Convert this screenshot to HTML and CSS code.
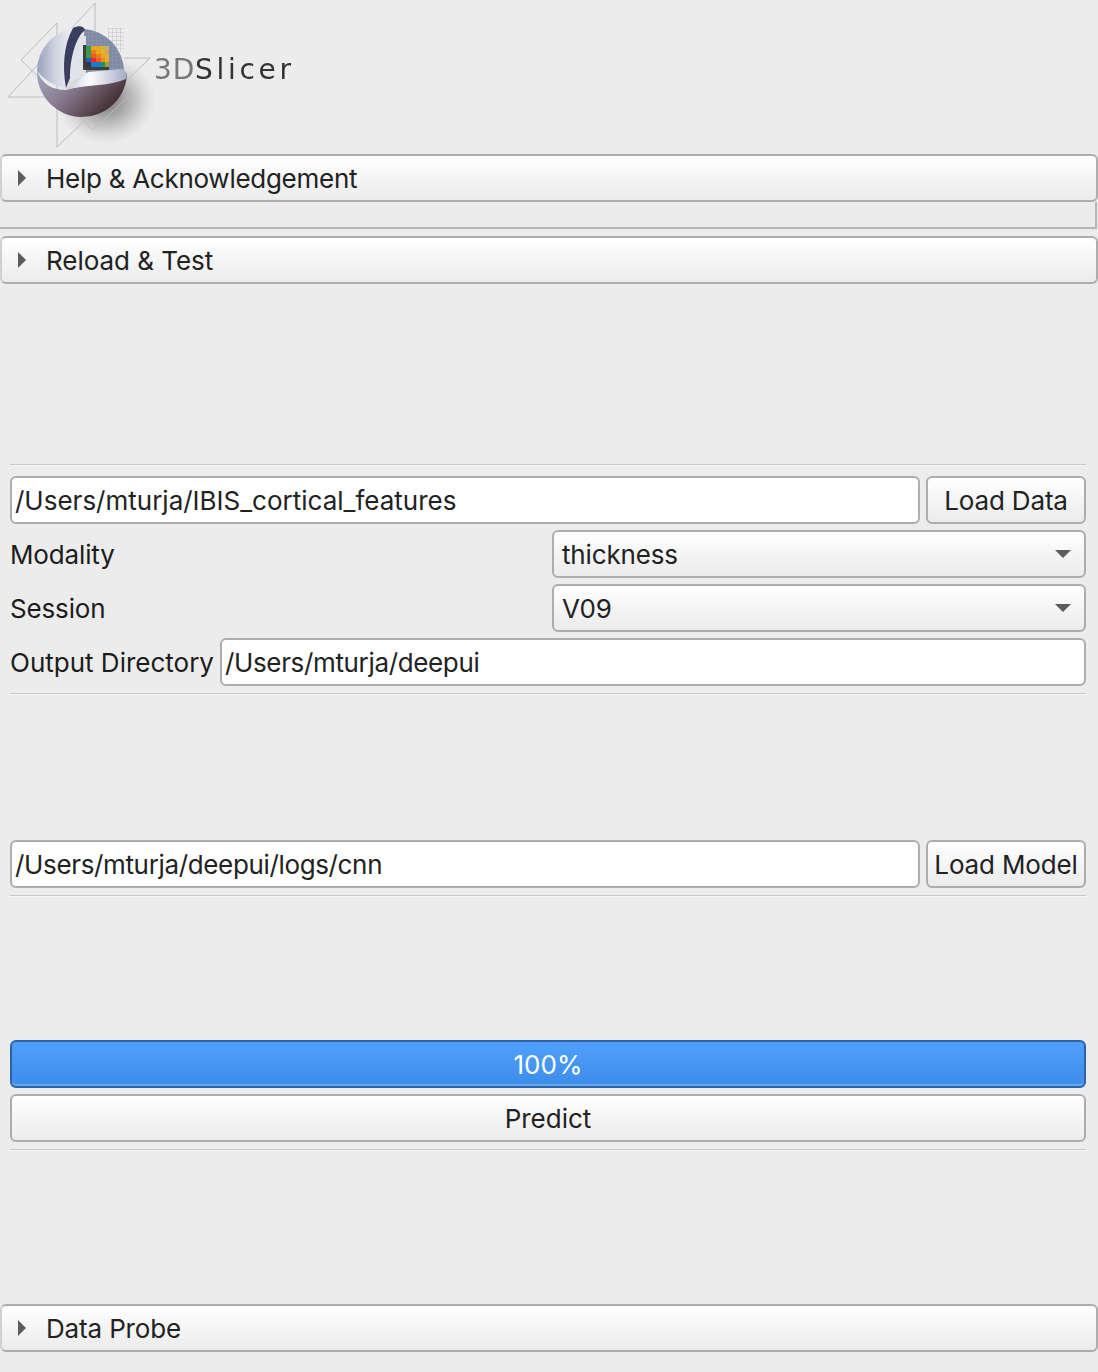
FILE: index.html
```html
<!DOCTYPE html>
<html lang="en">
<head>
    <meta charset="UTF-8">
    <meta name="viewport" content="width=device-width, initial-scale=1.0">
    <title>3D Slicer</title>
    <link rel="stylesheet" href="styles.css">
</head>
<body>

<div class="logo">
    <svg class="logo-art" width="300" height="154" viewBox="0 0 300 154">
        <defs>
            <radialGradient id="shadow">
                <stop offset="0" stop-color="#4a4a4a" stop-opacity="0.8"/>
                <stop offset="0.55" stop-color="#777" stop-opacity="0.4"/>
                <stop offset="1" stop-color="#aaa" stop-opacity="0"/>
            </radialGradient>
            <linearGradient id="shell" x1="0" y1="0" x2="1" y2="0">
                <stop offset="0" stop-color="#98a0ba"/>
                <stop offset="0.45" stop-color="#cdd2df"/>
                <stop offset="0.9" stop-color="#eceef3"/>
            </linearGradient>
            <linearGradient id="lower" x1="0" y1="0" x2="1" y2="0.5">
                <stop offset="0" stop-color="#a0a6c0"/>
                <stop offset="0.45" stop-color="#8a7c90"/>
                <stop offset="1" stop-color="#3f2a2e"/>
            </linearGradient>
            <linearGradient id="ledge" x1="0" y1="0" x2="1" y2="0">
                <stop offset="0" stop-color="#c9cede"/>
                <stop offset="0.4" stop-color="#fbfbfc"/>
                <stop offset="1" stop-color="#a5abc4"/>
            </linearGradient>
            <pattern id="mesh" width="4" height="4" patternUnits="userSpaceOnUse">
                <path d="M4 0H0V4" fill="none" stroke="#b0b0b8" stroke-width="0.7"/>
            </pattern>
        </defs>
        <ellipse cx="106" cy="100" rx="50" ry="44" fill="url(#shadow)"/>
        <g fill="none" stroke="#bcbcbc" stroke-width="1">
            <path d="M95 3 8 97H57"/>
            <path d="M57 23V147L150 58H124"/>
            <path d="M57 23 21 60 93 130 130 95"/>
            <path d="M95 3V32"/>
        </g>
        <rect x="108" y="28" width="16" height="24" fill="url(#mesh)"/>
        <path d="M76 27A45 45 0 0 0 37 71 45 45 0 0 0 66 88L72 60Z" fill="url(#shell)"/>
        <path d="M84 29A43 43 0 0 1 124 71L84 74Z" fill="#7f8aa6"/>
        <path d="M84 29A43 43 0 0 1 124 71L84 74Z" fill="url(#mesh)" opacity="0.45"/>
        <path d="M72 36H86V76L70 82Z" fill="#e0e3ea"/>
        <path d="M73 28C79 25 84 26 85 30 75 38 70 60 70 78L66 88C62 66 64 44 73 28Z" fill="#3a3e60"/>
        <path d="M83 45H86V67H109V70H83Z" fill="#3f3f3c"/>
        <g>
            <rect x="86" y="46" width="5" height="4" fill="#2f9a52"/><rect x="91" y="46" width="5" height="4" fill="#e8a81e"/><rect x="96" y="46" width="5" height="4" fill="#e8a81e"/><rect x="101" y="46" width="4" height="4" fill="#d8b04a"/><rect x="105" y="46" width="4" height="4" fill="#c9b070"/>
            <rect x="86" y="50" width="5" height="4" fill="#2f9a52"/><rect x="91" y="50" width="5" height="4" fill="#ee7a22"/><rect x="96" y="50" width="5" height="4" fill="#e8a81e"/><rect x="101" y="50" width="4" height="4" fill="#e8b01e"/><rect x="105" y="50" width="4" height="4" fill="#c9a860"/>
            <rect x="86" y="54" width="5" height="4" fill="#3a9a50"/><rect x="91" y="54" width="5" height="4" fill="#f05a20"/><rect x="96" y="54" width="5" height="4" fill="#ee7a22"/><rect x="101" y="54" width="4" height="4" fill="#e8a81e"/><rect x="105" y="54" width="4" height="4" fill="#e0b040"/>
            <rect x="86" y="58" width="5" height="4" fill="#1d62c0"/><rect x="91" y="58" width="5" height="4" fill="#ee2a1a"/><rect x="96" y="58" width="5" height="4" fill="#f05a20"/><rect x="101" y="58" width="4" height="4" fill="#ee8a1e"/><rect x="105" y="58" width="4" height="4" fill="#e8b01e"/>
            <rect x="86" y="62" width="5" height="5" fill="#34343c"/><rect x="91" y="62" width="5" height="5" fill="#1d7ad0"/><rect x="96" y="62" width="5" height="5" fill="#1d7ad0"/><rect x="101" y="62" width="4" height="5" fill="#1d9a50"/><rect x="105" y="62" width="4" height="5" fill="#9aa040"/>
        </g>
        <path d="M37 71A45 45 0 0 0 127 73L124 78C106 86 84 84 66 90 52 90 42 84 37 71Z" fill="url(#lower)"/>
        <path d="M66 88C78 84 82 76 88 72L122 69 127 73 126 79C108 87 84 84 66 90Z" fill="url(#ledge)"/>
        <text class="logo-3d" x="154" y="79">3D</text>
        <text class="logo-name" x="195" y="79">Slicer</text>
    </svg>
</div>

<button class="section help"><span class="arrow"></span>Help &amp; Acknowledgement</button>
<div class="strip"></div>
<button class="section reload"><span class="arrow"></span>Reload &amp; Test</button>

<div class="panel data-panel">
    <div class="line"></div>
    <div class="row first">
        <input class="path grow wide" type="text" value="/Users/mturja/IBIS_cortical_features">
        <button class="btn load">Load Data</button>
    </div>
    <div class="row">
        <label class="grow">Modality</label>
        <div class="combo"><span>thickness</span><span class="caret"></span></div>
    </div>
    <div class="row">
        <label class="grow">Session</label>
        <div class="combo"><span>V09</span><span class="caret"></span></div>
    </div>
    <div class="row">
        <label class="wide">Output Directory</label>
        <input class="path grow tight" type="text" value="/Users/mturja/deepui">
    </div>
    <div class="line after"></div>
</div>

<div class="panel model-panel">
    <div class="row">
        <input class="path grow tight" type="text" value="/Users/mturja/deepui/logs/cnn">
        <button class="btn load">Load Model</button>
    </div>
    <div class="line after"></div>
</div>

<div class="panel predict-panel">
    <div class="progress">100%</div>
    <div class="row">
        <button class="btn grow wide">Predict</button>
    </div>
    <div class="line after"></div>
</div>

<button class="section probe"><span class="arrow"></span>Data Probe</button>

</body>
</html>
```

FILE: styles.css
```css
* {
    box-sizing: border-box;
}
body {
    margin: 0;
    height: 1372px;
    overflow: hidden;
    background-color: #ececec;
    font-family: Inter, "Noto Sans", sans-serif;
    font-size: 26px;
    letter-spacing: -0.15px;
    color: #222;
}
.logo {
    height: 154px;
}
.logo-art {
    display: block;
    filter: blur(0.4px);
}
.logo-3d, .logo-name {
    font-family: "DejaVu Sans", sans-serif;
    font-size: 28px;
}
.logo-3d {
    letter-spacing: 1px;
    fill: #777;
}
.logo-name {
    letter-spacing: 3.7px;
    fill: #333;
}
.section {
    display: flex;
    align-items: center;
    width: 100%;
    height: 48px;
    padding: 0 0 0 16px;
    border: 2px solid #adadad;
    border-left-color: #d0d0d0;
    border-radius: 6px;
    background: linear-gradient(#fff, #ebebeb);
    font: inherit;
    letter-spacing: inherit;
    color: inherit;
}
.arrow {
    width: 0;
    height: 0;
    margin-right: 20px;
    border-left: 8px solid #5c5c5c;
    border-top: 8px solid transparent;
    border-bottom: 8px solid transparent;
}
.strip {
    height: 27px;
    border-right: 2px solid #b5b5b5;
    border-bottom: 2px solid #b5b5b5;
    margin-right: 1px;
}
.section.help {
    letter-spacing: -0.27px;
}
.section.reload {
    margin-top: 7px;
    letter-spacing: -0.03px;
}
.probe {
    margin-top: 153px;
}
.panel {
    padding: 0 12px 0 10px;
}
.data-panel {
    margin-top: 180px;
}
.model-panel {
    margin-top: 145px;
}
.predict-panel {
    margin-top: 143px;
}
.line {
    height: 2px;
    background-color: #c9c9c9;
    border-bottom: 1px solid #f6f6f6;
}
.line.after {
    margin-top: 7px;
}
.row {
    display: flex;
    align-items: center;
    gap: 6px;
    height: 48px;
    margin-top: 6px;
}
.row.first {
    margin-top: 10px;
}
.model-panel .row:first-child {
    margin-top: 0;
}
.grow {
    flex: 1;
    min-width: 0;
}
label {
    color: #1c1c1c;
    white-space: nowrap;
}
.path {
    height: 48px;
    padding: 0 3px;
    border: 2px solid #adadad;
    border-radius: 6px;
    background-color: #fff;
    font: inherit;
    letter-spacing: inherit;
    color: #222;
}
.btn {
    height: 48px;
    padding: 0;
    border: 2px solid #adadad;
    border-radius: 6px;
    background: linear-gradient(#fff, #ebebeb);
    font: inherit;
    letter-spacing: inherit;
    color: #222;
}
.load {
    width: 160px;
}
.combo {
    display: flex;
    align-items: center;
    justify-content: space-between;
    width: 534px;
    height: 48px;
    padding: 0 13px 0 8px;
    border: 2px solid #adadad;
    border-radius: 6px;
    background: linear-gradient(#fff, #ebebeb);
}
.caret {
    width: 0;
    height: 0;
    border-top: 8px solid #5c5c5c;
    border-left: 8px solid transparent;
    border-right: 8px solid transparent;
}
.progress {
    height: 48px;
    line-height: 46px;
    text-align: center;
    letter-spacing: 0;
    color: #fff;
    border: 2px solid #2b64a8;
    border-radius: 6px;
    background: linear-gradient(#50a1fd, #3d8bea);
    box-shadow: inset 0 -2px 0 #6aa8f0;
}
.path.tight {
    letter-spacing: -0.35px;
}
.wide, .btn.wide, .path.wide {
    letter-spacing: 0;
}
```
